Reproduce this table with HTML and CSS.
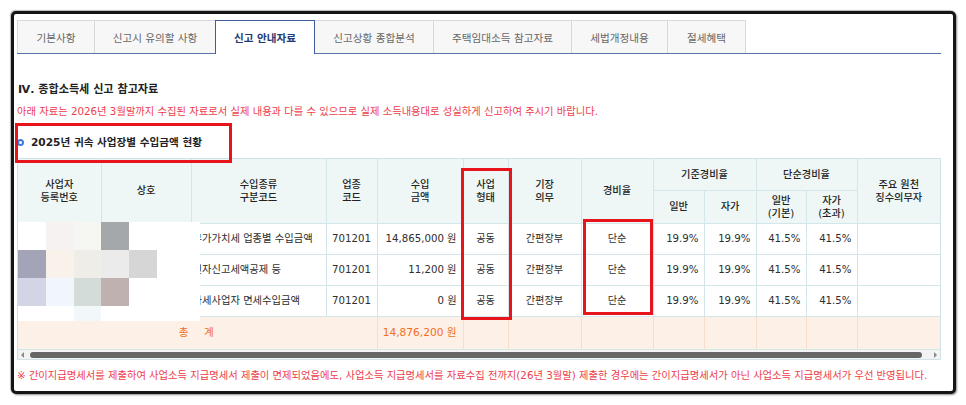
FILE: index.html
```html
<!DOCTYPE html>
<html lang="ko">
<head>
<meta charset="utf-8">
<title>신고 안내자료</title>
<link rel="stylesheet" href="styles.css">
</head>
<body>
<div class="frame">
  <div class="tabs">
    <div class="tab">기본사항</div>
    <div class="tab">신고시 유의할 사항</div>
    <div class="tab on">신고 안내자료</div>
    <div class="tab">신고상황 종합분석</div>
    <div class="tab">주택임대소득 참고자료</div>
    <div class="tab">세법개정내용</div>
    <div class="tab">절세혜택</div>
  </div>

  <h2 class="sec-title">Ⅳ. 종합소득세 신고 참고자료</h2>
  <p class="notice">아래 자료는 2026년 3월말까지 수집된 자료로서 실제 내용과 다를 수 있으므로 실제 소득내용대로 성실하게 신고하여 주시기 바랍니다.</p>
  <h3 class="sub-title"><span class="bullet"></span>2025년 귀속 사업장별 수입금액 현황</h3>

  <div class="tbl-wrap">
    <table class="data">
      <colgroup>
        <col class="c83"><col class="c90"><col class="c135"><col class="c51"><col class="c86"><col class="c45"><col class="c73"><col class="c72"><col class="c51"><col class="c52"><col class="c50"><col class="c51"><col class="c83">
      </colgroup>
      <thead>
        <tr class="h1">
          <th rowspan="2">사업자<br>등록번호</th>
          <th rowspan="2">상호</th>
          <th rowspan="2">수입종류<br>구분코드</th>
          <th rowspan="2">업종<br>코드</th>
          <th rowspan="2">수입<br>금액</th>
          <th rowspan="2">사업<br>형태</th>
          <th rowspan="2">기장<br>의무</th>
          <th rowspan="2">경비율</th>
          <th colspan="2">기준경비율</th>
          <th colspan="2">단순경비율</th>
          <th rowspan="2">주요 원천<br>징수의무자</th>
        </tr>
        <tr class="h2">
          <th>일반</th>
          <th>자가</th>
          <th>일반<br>(기본)</th>
          <th>자가<br>(초과)</th>
        </tr>
      </thead>
      <tbody>
        <tr>
          <td></td><td></td>
          <td class="kind">부가가치세 업종별 수입금액</td>
          <td>701201</td>
          <td class="num">14,865,000 원</td>
          <td>공동</td><td>간편장부</td><td>단순</td>
          <td class="pct">19.9%</td><td class="pct">19.9%</td><td class="pct">41.5%</td><td class="pct">41.5%</td>
          <td></td>
        </tr>
        <tr>
          <td></td><td></td>
          <td class="kind">전자신고세액공제 등</td>
          <td>701201</td>
          <td class="num">11,200 원</td>
          <td>공동</td><td>간편장부</td><td>단순</td>
          <td class="pct">19.9%</td><td class="pct">19.9%</td><td class="pct">41.5%</td><td class="pct">41.5%</td>
          <td></td>
        </tr>
        <tr>
          <td></td><td></td>
          <td class="kind">과세사업자 면세수입금액</td>
          <td>701201</td>
          <td class="num">0 원</td>
          <td>공동</td><td>간편장부</td><td>단순</td>
          <td class="pct">19.9%</td><td class="pct">19.9%</td><td class="pct">41.5%</td><td class="pct">41.5%</td>
          <td></td>
        </tr>
        <tr class="sum">
          <td colspan="4" class="sum-label">총 계</td>
          <td class="num">14,876,200 원</td>
          <td></td><td></td><td></td><td></td><td></td><td></td><td></td><td></td>
        </tr>
      </tbody>
    </table>
    <div class="hscroll">
      <span class="arr left"></span>
      <span class="thumb"></span>
      <span class="arr right"></span>
    </div>
  </div>

  <p class="foot">※ 간이지급명세서를 제출하여 사업소득 지급명세서 제출이 면제되었음에도, 사업소득 지급명세서를 자료수집 전까지(26년 3월말) 제출한 경우에는 간이지급명세서가 아닌 사업소득 지급명세서가 우선 반영됩니다.</p>
</div>

<div class="mosaic">
  <i class="w"></i><i class="k1"></i><i class="k2"></i><i class="k3"></i><i class="w"></i><i class="w"></i>
  <i class="k4"></i><i class="k5"></i><i class="k6"></i><i class="k7"></i><i class="k8"></i><i class="w"></i>
  <i class="k9"></i><i class="k10"></i><i class="k11"></i><i class="k12"></i><i class="w"></i><i class="w"></i>
  <i class="w"></i><i class="w"></i><i class="k13"></i><i class="w"></i><i class="w"></i><i class="w"></i>
</div>

<div class="mark mark-title"></div>
<div class="mark mark-type"></div>
<div class="mark mark-rate"></div>
</body>
</html>
```

FILE: styles.css
```css
* { box-sizing: border-box; }

html, body {
  margin: 0;
  padding: 0;
  background: #ffffff;
}

body {
  position: relative;
  width: 966px;
  height: 405px;
  overflow: hidden;
  font-family: "DejaVu Sans", "Noto Sans CJK KR", sans-serif;
  color: #333;
}

.frame {
  margin: 11px 0 0 11px;
  width: 945px;
  height: 383px;
  border: 3px solid #151515;
  border-radius: 5px;
  box-shadow: 1px 1px 2px rgba(0, 0, 0, 0.45), -1px -1px 1px rgba(0, 0, 0, 0.25);
  padding: 6px 12px 0 3px;
  background: #fff;
}

/* tabs */
.tabs {
  display: grid;
  grid-template-columns: 78px 121px 99px 119px 138px 96px 78px;
  height: 34px;
  border-bottom: 1px solid #5a72a8;
  align-items: start;
}

.tab {
  height: 33px;
  display: flex;
  align-items: center;
  justify-content: center;
  background: #f7f7f7;
  border: 1px solid #d9d9d9;
  border-left: none;
  border-bottom: none;
  font-size: 10.6px;
  color: #666;
  white-space: nowrap;
}

.tab:first-child { border-left: 1px solid #d9d9d9; }

.tab.on {
  height: 34px;
  background: #fff;
  border: 1px solid #3d5b9e;
  border-bottom: none;
  margin-left: -1px;
  font-weight: bold;
  color: #1d3a74;
}

/* headings */
.sec-title {
  margin: 28px 0 0 1px;
  font-size: 11.1px;
  line-height: 16px;
  font-weight: bold;
  color: #222;
}

.notice {
  margin: 6px 0 0 0;
  font-size: 10.3px;
  line-height: 14px;
  color: #ee3d4c;
  white-space: nowrap;
}

.sub-title {
  margin: 16px 0 0 0;
  display: flex;
  align-items: center;
  font-size: 10.6px;
  line-height: 16px;
  font-weight: bold;
  color: #222;
}

.bullet {
  width: 7px;
  height: 7px;
  border: 2px solid #3d7be0;
  border-radius: 50%;
  margin-right: 7px;
  flex: 0 0 auto;
}

/* table */
.tbl-wrap {
  margin-top: 8px;
  width: 924px;
  border: 1px solid #cfe2e5;
}

.data {
  width: 922px;
  table-layout: fixed;
  border-collapse: collapse;
  border-style: hidden;
}

.c83 { width: 83px; }
.c90 { width: 90px; }
.c135 { width: 135px; }
.c51 { width: 51px; }
.c86 { width: 86px; }
.c45 { width: 45px; }
.c73 { width: 73px; }
.c72 { width: 72px; }
.c52 { width: 52px; }
.c50 { width: 50px; }

.data th,
.data td {
  border: 1px solid #d3e6e9;
  padding: 0;
  text-align: center;
  vertical-align: middle;
  font-size: 10.2px;
  line-height: 13px;
  color: #2e2e2e;
  white-space: nowrap;
}

.data th {
  background: #eef7f6;
  font-weight: 500;
  font-size: 10.2px;
  color: #222;
}

.data .h1 { height: 31px; }
.data .h2 { height: 33px; }
.data tbody tr { height: 31px; }
.data tbody tr.sum { height: 33px; }

.data td.kind {
  text-align: left;
  padding-left: 1px;
  font-size: 10.3px;
  overflow: visible;
}

.data td.num {
  text-align: right;
  padding-right: 6px;
}

.data td.pct {
  text-align: right;
  padding-right: 5px;
}

.data tr.sum td {
  background: #fdf0e6;
  border-color: #f8ddcb;
  color: #f26f22;
  font-size: 10.6px;
}

.data tr.sum td.sum-label {
  word-spacing: 12px;
  padding-right: 2px;
}

/* fake horizontal scrollbar */
.hscroll {
  height: 10px;
  border-top: 1px solid #d3e6e9;
  background: #f3f3f3;
  display: flex;
  align-items: center;
  padding: 0 3px;
}

.arr {
  width: 0;
  height: 0;
  border-top: 3px solid transparent;
  border-bottom: 3px solid transparent;
  flex: 0 0 auto;
}

.arr.left { border-right: 3px solid #8a8a8a; margin-right: 6px; }
.arr.right { border-left: 3px solid #8a8a8a; margin-left: 12px; }

.thumb {
  flex: 1 1 auto;
  height: 6px;
  border-radius: 3px;
  background: #666;
}

.foot {
  margin: 8px 0 0 0;
  font-size: 10.3px;
  line-height: 14px;
  color: #ee3d4c;
  white-space: nowrap;
}

/* pixelated privacy mosaic over the first columns */
.mosaic {
  position: absolute;
  left: 18px;
  top: 222px;
  width: 182px;
  height: 99px;
  display: grid;
  grid-template-columns: 28px 28px 27px 28px 28px 43px;
  grid-template-rows: 28px 28px 28px 15px;
}

.mosaic i { display: block; }
.mosaic .w { background: #ffffff; }
.mosaic .k1 { background: #f6f2f2; }
.mosaic .k2 { background: #f6f6f3; }
.mosaic .k3 { background: #a5a8ab; }
.mosaic .k4 { background: #a4a4b9; }
.mosaic .k5 { background: #f8f2ea; }
.mosaic .k6 { background: #efede8; }
.mosaic .k7 { background: #ebebeb; }
.mosaic .k8 { background: #d6d6d6; }
.mosaic .k9 { background: #d3d5e6; }
.mosaic .k10 { background: #f1f6fc; }
.mosaic .k11 { background: #d4dcd9; }
.mosaic .k12 { background: #c0b1b1; }
.mosaic .k13 { background: #f2f7fa; }

/* red annotation boxes */
.mark {
  position: absolute;
  border: 3px solid #e8141c;
}

.mark-title { left: 15px; top: 123px; width: 217px; height: 40px; }
.mark-type { left: 461px; top: 168px; width: 51px; height: 152px; }
.mark-rate { left: 583px; top: 219px; width: 70px; height: 96px; }
```
